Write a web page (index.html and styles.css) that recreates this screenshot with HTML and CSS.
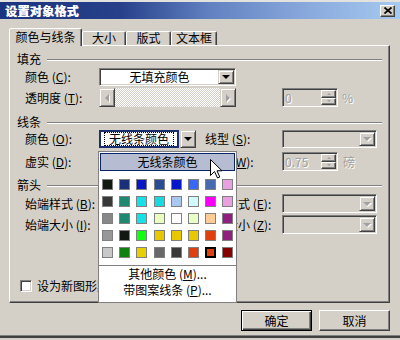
FILE: index.html
```html
<!DOCTYPE html>
<html lang="zh-CN">
<head>
<meta charset="utf-8">
<title>设置对象格式</title>
<link rel="stylesheet" href="styles.css">
</head>
<body>
<div class="dialog">
  <div class="titlebar">
    <span class="title">设置对象格式</span>
    <span class="close"><svg width="8" height="7" viewBox="0 0 8 7"><path d="M0.5 0.5L7.5 6.5M7.5 0.5L0.5 6.5" stroke="#000" stroke-width="1.7"/></svg></span>
  </div>

  <div class="tabs">
    <div class="tab active t1">颜色与线条</div>
    <div class="tab t2">大小</div>
    <div class="tab t3">版式</div>
    <div class="tab t4">文本框</div>
  </div>

  <div class="pane">
    <div class="group g1"><span>填充</span><i class="rule"></i></div>
    <div class="row r1">
      <span class="lbl">颜色 (<u>C</u>):</span>
      <div class="combo w137"><div class="field">无填充颜色</div><div class="ddbtn"></div></div>
    </div>
    <div class="row r2">
      <span class="lbl">透明度 (<u>T</u>):</span>
      <div class="slider"><div class="sbtn left"></div><div class="track"></div><div class="sbtn right"></div></div>
      <div class="spin sp1"><div class="val">0</div><div class="spinbtns"><div class="up"></div><div class="dn"></div></div></div>
      <span class="unit dis">%</span>
    </div>

    <div class="group g2"><span>线条</span><i class="rule"></i></div>
    <div class="row r3">
      <span class="lbl">颜色 (<u>O</u>):</span>
      <div class="combo hot"><div class="field"><span class="focus">无线条颜色</span></div><div class="ddbtn"></div></div>
      <span class="lbl2">线型 (<u>S</u>):</span>
      <div class="combo disabled w95"><div class="field"></div><div class="ddbtn"></div></div>
    </div>
    <div class="row r4">
      <span class="lbl">虚实 (<u>D</u>):</span>
      <div class="combo disabled w97"><div class="field"></div><div class="ddbtn"></div></div>
      <span class="lbl2">粗细 (<u>W</u>):</span>
      <div class="spin"><div class="val">0.75</div><div class="spinbtns"><div class="up"></div><div class="dn"></div></div></div>
      <span class="unit2 dis">磅</span>
    </div>

    <div class="group g3"><span>箭头</span><i class="rule"></i></div>
    <div class="row r5">
      <span class="lbl">始端样式 (<u>B</u>):</span>
      <div class="combo disabled w97"><div class="field"></div><div class="ddbtn"></div></div>
      <span class="lbl3">末端样式 (<u>E</u>):</span>
      <div class="combo disabled w95"><div class="field"></div><div class="ddbtn"></div></div>
    </div>
    <div class="row r6">
      <span class="lbl">始端大小 (<u>I</u>):</span>
      <div class="combo disabled w97"><div class="field"></div><div class="ddbtn"></div></div>
      <span class="lbl3">末端大小 (<u>Z</u>):</span>
      <div class="combo disabled w95"><div class="field"></div><div class="ddbtn"></div></div>
    </div>

    <div class="checkrow">
      <span class="checkbox"></span>
      <span class="checklbl">设为新图形默认值 (<u>A</u>)</span>
    </div>
  </div>

  <div class="buttons">
    <div class="btn default">确定</div>
    <div class="btn">取消</div>
  </div>

  <div class="popup">
    <div class="nocolor">无线条颜色</div>
    <div class="swatches">
      <i style="background:#101810"></i><i style="background:#1a3078"></i><i style="background:#0818c8"></i><i style="background:#284c98"></i><i style="background:#0818c8"></i><i style="background:#3868f8"></i><i style="background:#4868b0"></i><i style="background:#e8a0e0"></i>
      <i style="background:#383838"></i><i style="background:#208870"></i><i style="background:#18e0e8"></i><i style="background:#18d8e0"></i><i style="background:#a8c8f0"></i><i style="background:#d0fcff"></i><i style="background:#f800f8"></i><i style="background:#e8a0e0"></i>
      <i style="background:#888888"></i><i style="background:#208870"></i><i style="background:#18e0e8"></i><i style="background:#e8ffc0"></i><i style="background:#ffffff"></i><i style="background:#e8ffc8"></i><i style="background:#ffcc98"></i><i style="background:#902080"></i>
      <i style="background:#989898"></i><i style="background:#101810"></i><i style="background:#10ff10"></i><i style="background:#e8c800"></i><i style="background:#e8c800"></i><i style="background:#e8c800"></i><i style="background:#e04010"></i><i style="background:#902080"></i>
      <i style="background:#c8c8c8"></i><i style="background:#108010"></i><i style="background:#e8d000"></i><i style="background:#686868"></i><i style="background:#383838"></i><i style="background:#e04010"></i><i class="sel" style="background:#e04010"></i><i style="background:#880000"></i>
    </div>
    <div class="sep"></div>
    <div class="item">其他颜色 (<u>M</u>)...</div>
    <div class="item">带图案线条 (<u>P</u>)...</div>
  </div>

  <svg class="cursor" width="13" height="20" viewBox="0 0 13 20"><path d="M0.5 0.5V16.5L4.5 12.5L7.5 19L9.8 18L7 11.8H12Z" fill="#fff" stroke="#000" stroke-width="1" stroke-linejoin="miter"/></svg>
</div>
</body>
</html>
```

FILE: styles.css
```css
* { box-sizing: border-box; }
html, body { margin: 0; padding: 0; }
body {
  width: 400px;
  height: 340px;
  overflow: hidden;
  background: #d4d0c8;
  font-family: "Noto Sans CJK SC", "Noto Sans", sans-serif;
  font-size: 12px;
  color: #000;
  white-space: nowrap;
}
u { text-decoration: underline; text-underline-offset: 1px; }

.dialog {
  position: relative;
  width: 400px;
  height: 338px;
  background: #d4d0c8;
  border-top: 2px solid #e4e2de;
  border-bottom: 2px solid #404040;
  box-shadow: inset 0 -1px #808080;
}

/* title bar */
.titlebar {
  height: 17px;
  display: flex;
  align-items: center;
  padding-left: 5px;
  background: linear-gradient(90deg, #1c3480 0%, #26408a 30%, #6080c0 52%, #88a8dc 76%, #a6caf0 100%);
}
.title {
  color: #fff;
  font-weight: bold;
  line-height: 17px;
  letter-spacing: 0.3px;
  text-shadow: 0.6px 0 0 #fff;
}
.close {
  margin-left: auto;
  margin-right: 5px;
  width: 15px;
  height: 12px;
  display: flex;
  align-items: center;
  justify-content: center;
  background: #d4d0c8;
  border: 1px solid;
  border-color: #fff #404040 #404040 #fff;
  box-shadow: inset -1px -1px #808080;
}

/* tabs */
.tabs {
  position: relative;
  z-index: 1;
  display: flex;
  align-items: flex-end;
  height: 17px;
  margin: 9px 0 0 9px;
}
.tab {
  height: 14px;
  line-height: 12px;
  text-align: center;
  border: 1px solid;
  border-bottom: 0;
  border-color: #fff #404040 transparent #fff;
  box-shadow: inset -1px 0 #808080;
  border-radius: 2px 2px 0 0;
  background: #d4d0c8;
}
.tab.active { height: 18px; margin-bottom: -1px; line-height: 16px; }
.t1 { width: 73px; }
.t2 { width: 44px; }
.t3 { width: 45px; }
.t4 { width: 46px; }

/* pane */
.pane {
  margin-left: 9px;
  width: 381px;
  height: 258px;
  border: 1px solid;
  border-color: #fff #404040 #404040 #fff;
  box-shadow: inset -1px -1px #808080;
  padding-top: 6px;
  display: flex;
  flex-direction: column;
}
.group {
  display: flex;
  align-items: center;
  height: 14px;
  margin: 0 7px 0 7px;
  line-height: 14px;
}
.rule {
  flex: 1;
  height: 2px;
  margin-left: 6px;
  margin-top: 2px;
  border-top: 1px solid #808080;
  border-bottom: 1px solid #fff;
}
.g2 { margin-top: 8px; }
.g3 { margin-top: 7px; }

.row { display: flex; align-items: center; margin-left: 15px; line-height: 14px; }
.r1 { margin-top: 2px; height: 18px; }
.r2 { margin-top: 2px; height: 19px; }
.r3 { margin-top: 1px; height: 18px; }
.r4 { margin-top: 4px; height: 19px; }
.r5 { margin-top: 2px; height: 19px; }
.r6 { margin-top: 2px; height: 19px; }
.lbl { width: 74px; }
.lbl2 { width: 77px; margin-left: 9px; }
.lbl3 { width: 80px; margin-left: 6px; }

/* combos */
.combo {
  display: flex;
  height: 100%;
  padding: 1px;
  background: #fff;
  border: 1px solid;
  border-color: #808080 #fff #fff #808080;
  box-shadow: inset 1px 1px #404040, inset -1px -1px #d4d0c8;
}
.w137 { width: 137px; }
.w97 { width: 97px; }
.w95 { width: 95px; }
.combo .field {
  flex: 1;
  display: flex;
  align-items: center;
  justify-content: center;
}
.ddbtn {
  width: 16px;
  display: flex;
  align-items: center;
  justify-content: center;
  background: #d4d0c8;
  border: 1px solid;
  border-color: #d4d0c8 #404040 #404040 #d4d0c8;
  box-shadow: inset 1px 1px #fff, inset -1px -1px #808080;
}
.ddbtn::after {
  content: "";
  border-style: solid;
  border-width: 4px 4px 0;
  border-color: #000 transparent transparent;
}
.combo.disabled { background: #d4d0c8; }
.combo.disabled .ddbtn::after {
  border-top-color: #a0a0a0;
  filter: drop-shadow(1px 1px 0 #fff);
}

.combo.hot {
  width: 97px;
  padding: 0;
  border: 0;
  box-shadow: none;
  background: transparent;
}
.combo.hot .field {
  flex: none;
  width: 80px;
  background: #fff;
  border: 2px solid #1b2e6e;
}
.focus {
  outline: 1px dotted #000;
  outline-offset: 0;
  padding: 0 4px;
  line-height: 12px;
}
.combo.hot .ddbtn { margin-left: 1px; width: 16px; }

/* slider */
.slider {
  width: 137px;
  height: 19px;
  display: flex;
}
.track {
  flex: 1;
  background: repeating-conic-gradient(#fff 0 25%, #d4d0c8 0 50%) 0 0 / 2px 2px;
}
.sbtn {
  width: 16px;
  display: flex;
  align-items: center;
  justify-content: center;
  background: #d4d0c8;
  border: 1px solid;
  border-color: #d4d0c8 #404040 #404040 #d4d0c8;
  box-shadow: inset 1px 1px #fff, inset -1px -1px #808080;
}
.sbtn::after {
  content: "";
  border-style: solid;
  filter: drop-shadow(1px 1px 0 #fff);
}
.sbtn.left::after { border-width: 4px 4px 4px 0; border-color: transparent #a0a0a0 transparent transparent; }
.sbtn.right::after { border-width: 4px 0 4px 4px; border-color: transparent transparent transparent #a0a0a0; }

/* spin */
.spin {
  width: 56px;
  height: 19px;
  display: flex;
  padding: 1px;
  background: #d4d0c8;
  border: 1px solid;
  border-color: #808080 #fff #fff #808080;
  box-shadow: inset 1px 1px #404040, inset -1px -1px #d4d0c8;
}
.sp1 { margin-left: 46px; }
.val {
  flex: 1;
  padding-left: 1px;
  line-height: 15px;
  color: #a0a0a0;
  text-shadow: 1px 1px 0 #fff;
}
.spinbtns { width: 15px; display: flex; flex-direction: column; }
.spinbtns div {
  flex: 1;
  display: flex;
  align-items: center;
  justify-content: center;
  background: #d4d0c8;
  border: 1px solid;
  border-color: #fff #404040 #404040 #fff;
  box-shadow: inset -1px -1px #808080;
}
.spinbtns div::after { content: ""; border-style: solid; }
.spinbtns .up::after { border-width: 0 2px 2px; border-color: transparent transparent #a0a0a0; }
.spinbtns .dn::after { border-width: 2px 2px 0; border-color: #a0a0a0 transparent transparent; }

.dis { color: #a0a0a0; text-shadow: 1px 1px 0 #fff; }
.unit { margin-left: 4px; }
.unit2 { margin-left: 5px; }

/* checkbox */
.checkrow {
  display: flex;
  align-items: center;
  height: 13px;
  margin: 45px 0 0 10px;
}
.checkbox {
  flex: none;
  width: 12px;
  height: 12px;
  background: #fff;
  border: 1px solid;
  border-color: #808080 #fff #fff #808080;
  box-shadow: inset 1px 1px #404040, inset -1px -1px #d4d0c8;
}
.checklbl {
  margin-left: 5px;
  width: 62px;
  overflow: hidden;
  line-height: 14px;
}

/* buttons */
.buttons {
  display: flex;
  justify-content: flex-end;
  gap: 7px;
  margin-top: 7px;
  padding-right: 10px;
}
.btn {
  width: 71px;
  height: 21px;
  line-height: 19px;
  text-align: center;
  background: #d4d0c8;
  border: 1px solid;
  border-color: #fff #404040 #404040 #fff;
  box-shadow: inset -1px -1px #808080;
}
.btn.default {
  border: 1px solid #000;
  box-shadow: inset 1px 1px #fff, inset -1px -1px #404040, inset -2px -2px #808080;
}

/* popup colour menu */
.popup {
  position: absolute;
  left: 98px;
  top: 149px;
  width: 139px;
  height: 152px;
  z-index: 5;
  background: #fff;
  border: 1px solid #808080;
  padding-top: 1px;
}
.nocolor {
  margin: 0 1px;
  height: 18px;
  line-height: 16px;
  text-align: center;
  background: #b6bdd2;
  border: 1px solid #0a246a;
}
.swatches {
  display: grid;
  grid-template-columns: repeat(8, 11px);
  grid-auto-rows: 11px;
  column-gap: 6.2px;
  row-gap: 6px;
  margin-top: 8px;
  padding-left: 3px;
}
.swatches i {
  display: block;
  border: 1px solid #808080;
}
.swatches i.sel {
  border: 1px solid #000;
  box-shadow: inset 0 0 0 1px #000;
}
.sep { margin-top: 7px; height: 1px; background: #808080; }
.item {
  height: 16px;
  line-height: 16px;
  text-align: center;
}

.cursor {
  position: absolute;
  left: 210px;
  top: 157px;
  z-index: 10;
}
```
